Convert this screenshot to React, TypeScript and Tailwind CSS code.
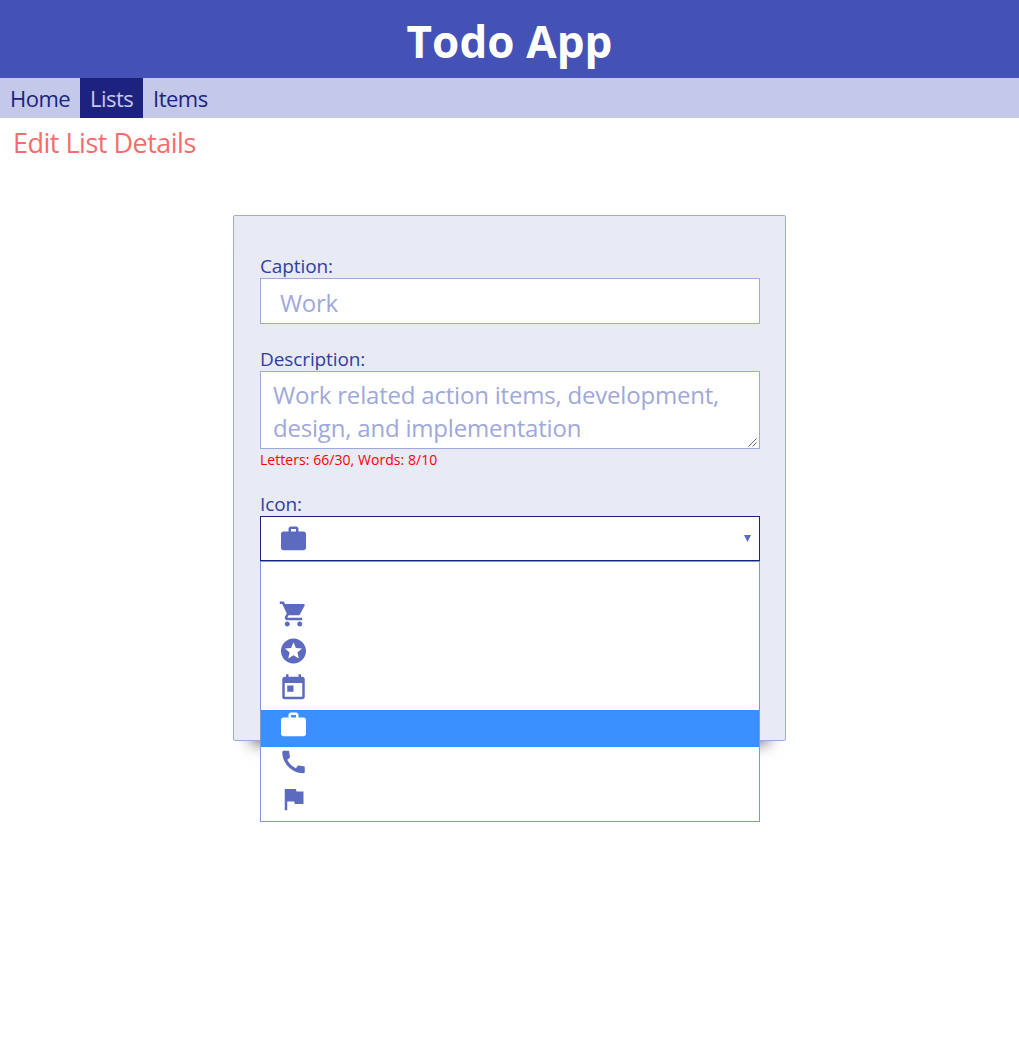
import type { ReactNode } from "react";
import { MdCall, MdFlag, MdShoppingCart, MdStars, MdToday, MdWork } from "react-icons/md";

const options = [null, MdShoppingCart, MdStars, MdToday, MdWork, MdCall, MdFlag];
const selected = 4;

function Label({ children }: { children: ReactNode }) {
  return (
    <div className="h-[25px] whitespace-nowrap text-[19px] leading-[26px] tracking-[-0.1px] text-[#303f9f]">
      {children}
    </div>
  );
}

export default function App() {
  return (
    <div className="h-[1052px] w-[1019px] overflow-hidden bg-white font-['Open_Sans','Noto_Sans',sans-serif]">
      <header className="flex h-[78px] items-center justify-center bg-[#4451b6]">
        <h1 className="whitespace-nowrap pt-[3px] text-[44px] leading-[60px] font-bold tracking-[0.1px] text-white">
          Todo App
        </h1>
      </header>
      <nav className="flex h-10 bg-[#c5c9e9] text-[22px] leading-[41px] text-[#1a237e]">
        <a className="w-20 whitespace-nowrap pl-[10px] tracking-[-0.5px]">Home</a>
        <a className="w-[63px] whitespace-nowrap bg-[#1d227f] pl-[10px] tracking-[-0.5px] text-[#c5cae9]">Lists</a>
        <a className="whitespace-nowrap pl-[10px] tracking-[-0.5px]">Items</a>
      </nav>
      <h2 className="h-[97px] whitespace-nowrap pl-[13px] text-[27px] leading-[49px] tracking-[-0.5px] text-[#f46d6d]">
        Edit List Details
      </h2>
      <main className="ml-[233px] h-[526px] w-[553px] rounded-[2px] border border-[#9fa8da] bg-[#e8eaf6] pt-[37px] pl-[26px] shadow-[0_20px_15px_-18px_rgba(0,0,0,0.65)]">
        <Label>Caption:</Label>
        <div className="h-[46px] w-[500px] border border-[#9fa8da] bg-white pl-[19px] text-[24px] leading-[48px] tracking-[-0.3px] text-[#9fa8da]">
          Work
        </div>
        <div className="h-[22px]" />
        <Label>Description:</Label>
        <div className="relative h-[78px] w-[500px] border border-[#9fa8da] bg-white pt-[6px] pl-3 text-[24px] leading-[33px] tracking-[-0.2px] whitespace-nowrap text-[#9fa8da]">
          <p>Work related action items, development,</p>
          <p>design, and implementation</p>
          <svg className="absolute right-[2px] bottom-[1px] h-[9px] w-[9px]" viewBox="0 0 9 9" stroke="#555" strokeWidth="0.9" fill="none">
            <path d="M0.5 8.5 8.5 0.5M4.5 8.5 8.5 4.5" />
          </svg>
        </div>
        <div className="h-[42px] whitespace-nowrap text-[14px] leading-[22px] tracking-[0.05px] text-[#ff0000]">
          Letters: 66/30, Words: 8/10
        </div>
        <Label>Icon:</Label>
        <div className="relative flex h-[45px] w-[500px] items-start justify-between border border-[#1a237e] bg-white pt-[7px] pr-[8px] pl-[18px] text-[#5c6bc0]">
          <MdWork size={30} className="-translate-x-[0.5px]" />
          <svg className="mt-[11px] h-[7px] w-[7px]" viewBox="0 0 7 7" fill="currentColor">
            <path d="M0 0h7L3.5 7z" />
          </svg>
          <ul className="absolute top-[44px] -left-px w-[500px] border border-[#7f98d6] bg-white">
            {options.map((Icon, i) => (
              <li key={i} className={i === selected ? "h-[37px] bg-[#3b90ff] pl-[18px] text-white" : "h-[37px] pl-[18px]"}>
                {Icon && <Icon size={30} className="-translate-x-[0.5px]" />}
              </li>
            ))}
          </ul>
        </div>
      </main>
    </div>
  );
}
